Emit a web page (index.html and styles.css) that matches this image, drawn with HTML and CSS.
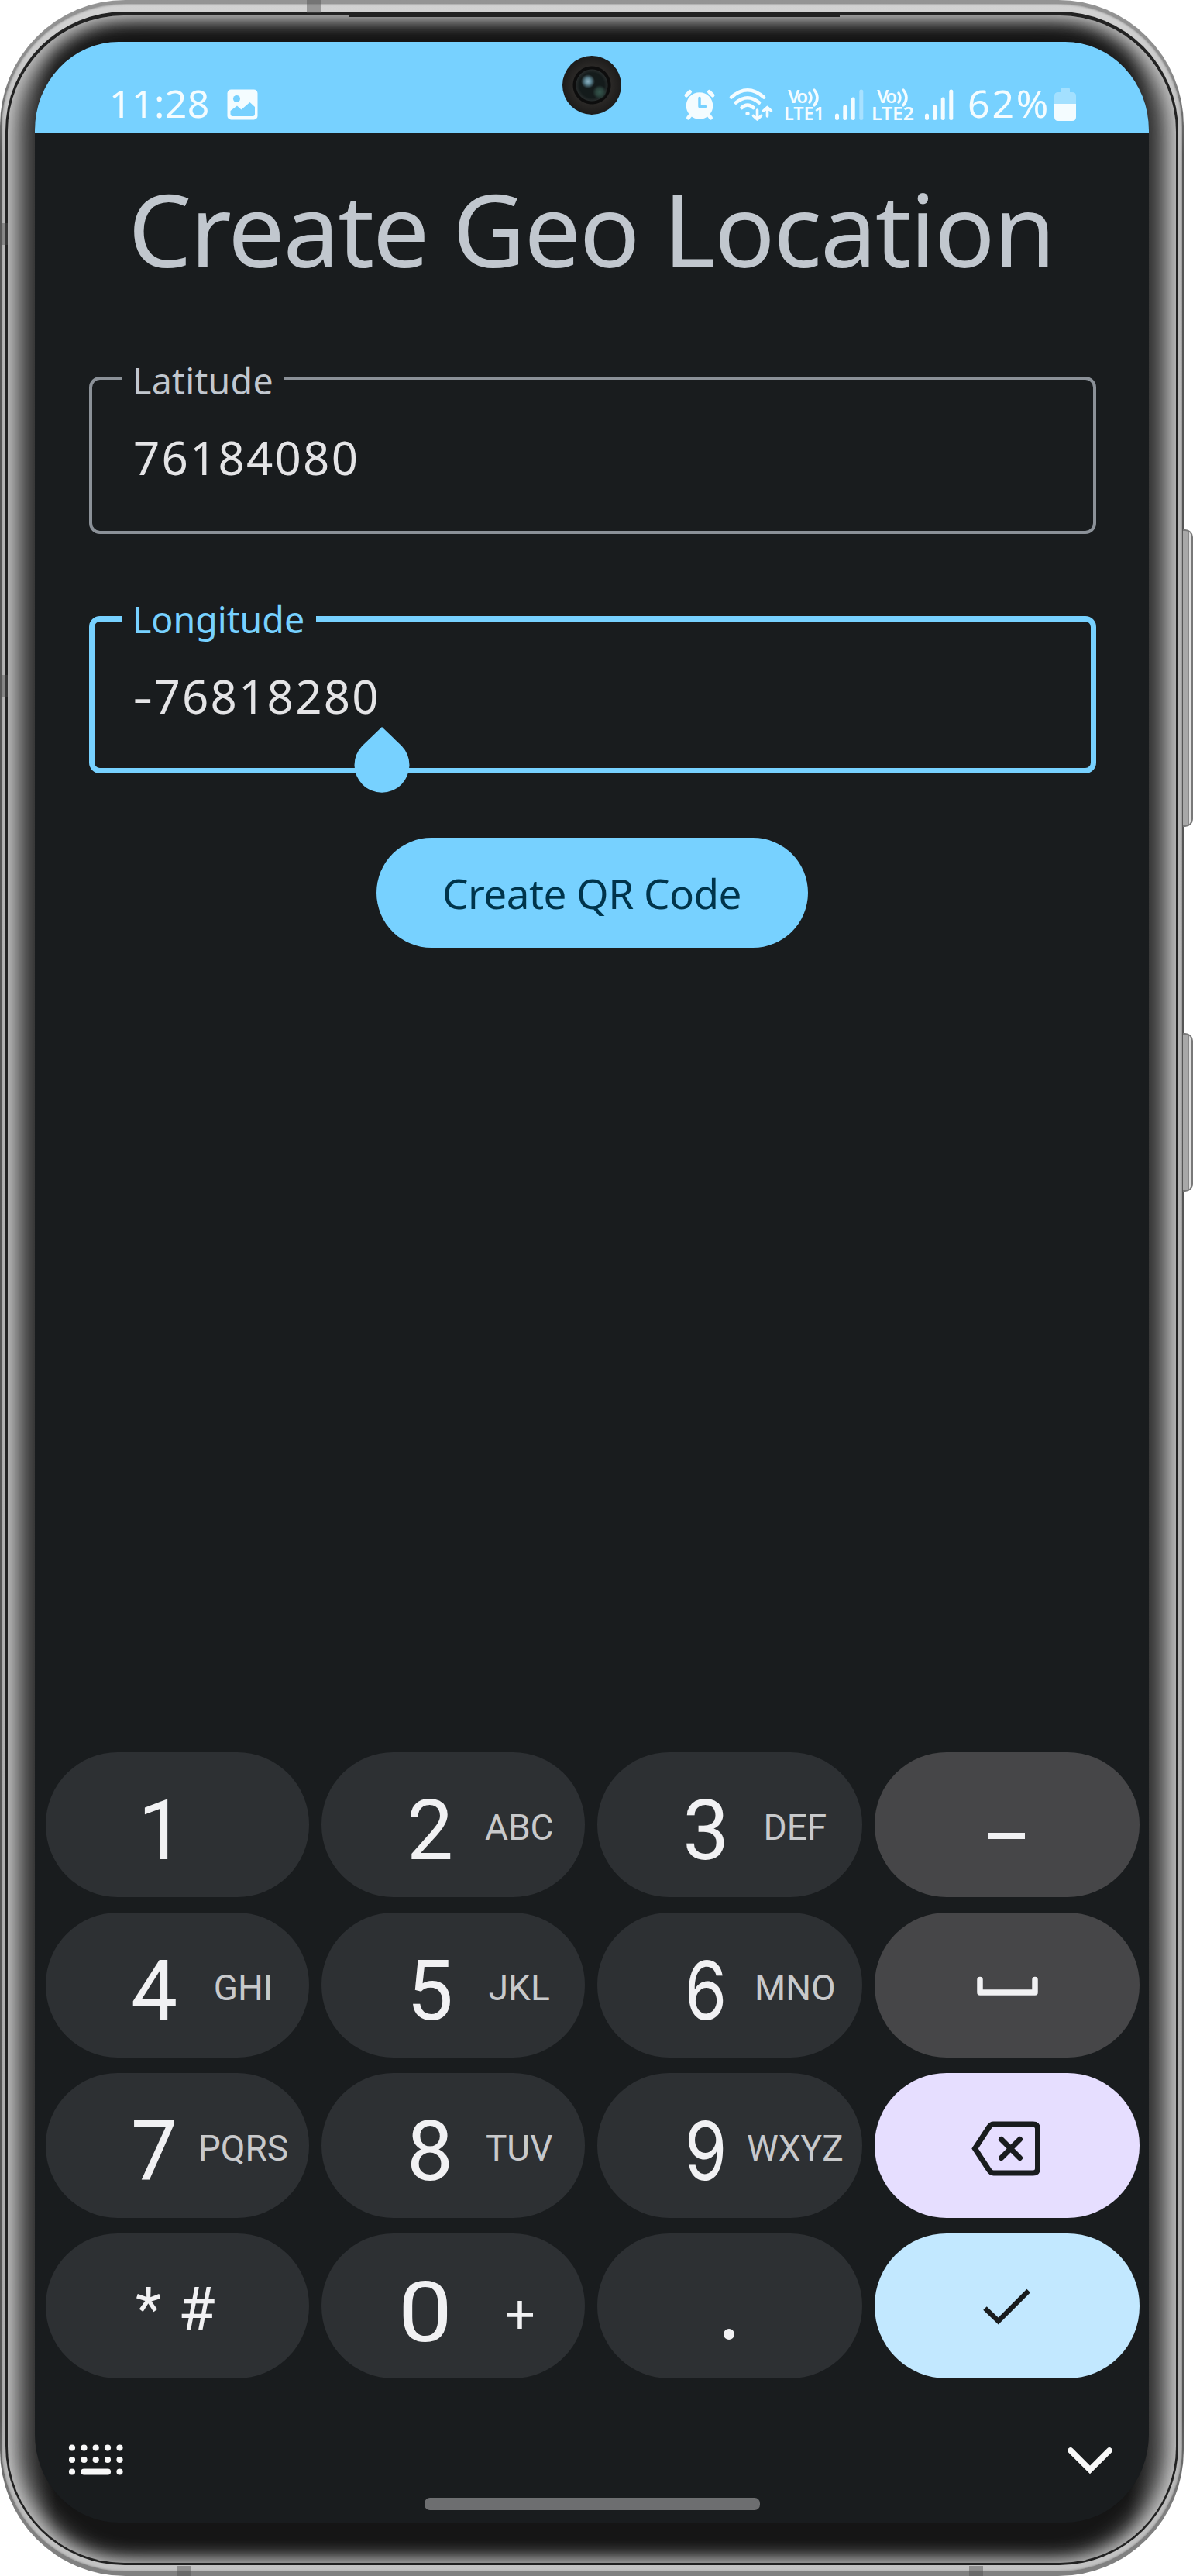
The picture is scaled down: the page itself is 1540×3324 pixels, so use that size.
FILE: index.html
```html
<!DOCTYPE html>
<html lang="en">
<head>
<meta charset="utf-8">
<title>Create Geo Location</title>
<link rel="stylesheet" href="styles.css">
</head>
<body>
<div class="phone">
  <i class="side-button volume"></i>
  <i class="side-button power"></i>
  <div class="rim"><div class="rim-dark"><div class="glass">
    <main class="screen">
      <header class="status">
        <span class="clock">11:28</span>
        <svg class="picture" width="40" height="40" viewBox="0 0 40 40"><rect x=".5" y=".5" width="39" height="39" rx="5" fill="#f4fcff"/><circle cx="12.500" cy="12.500" r="4.500" fill="#77d1ff"/><path d="M4.500 28 13 21.500l5.500 5 11-9.500 6.500 6v9q0 3-3 3H7.500q-3 0-3-3z" fill="#77d1ff"/></svg>
        <span class="spacer"></span>
        <svg class="alarm" width="40" height="40" viewBox="0 0 40 40"><g stroke="#f4fcff" stroke-width="5" stroke-linecap="round"><path d="M3 8 7.500 3.500M32.500 3.500 37 8M5.500 37l4-5M34.500 37l-4-5"/></g><circle cx="20" cy="21.500" r="17.300" fill="#f4fcff"/><path d="M20 11.500v11h7.500" fill="none" stroke="#77d1ff" stroke-width="3.500" stroke-linecap="round" stroke-linejoin="round"/></svg>
        <svg class="wifi" width="56" height="42" viewBox="0 0 56 42" fill="none" stroke="#f4fcff" stroke-width="4.500" stroke-linecap="round" stroke-linejoin="round"><path d="M3 11.500Q24 -7 45 11.500M9 18.500Q24 6 39 18.500M16.500 25Q24 18 31.500 25"/><circle cx="24" cy="32.500" r="2.600" fill="#f4fcff" stroke="none"/><path d="M36.500 28v12M31.500 35.500l5 4.500 5-4.500M49.500 36V24.500M44.500 29l5-4.500 5 4.500" stroke-width="3.600"/></svg>
        <svg class="volte one" width="54" height="44" viewBox="0 0 54 44"><text class="lte" x="4" y="20" textLength="26">Vo</text><text class="lte" x="-1" y="42" textLength="52" lengthAdjust="spacingAndGlyphs">LTE1</text><path d="M32 7q4 6 0 12M38 3q8 10 0 20" class="wave"/></svg>
        <svg class="bars first" width="38" height="40" viewBox="0 0 38 40"><path d="M3.500 34v3.500M13.800 23v14.500M24.200 13v24.500" class="bar"/><path d="M34.800 3v34.500" class="bar faint"/></svg>
        <svg class="volte two" width="56" height="44" viewBox="0 0 56 44"><text class="lte" x="5" y="20" textLength="26">Vo</text><text class="lte" x="-2" y="42" textLength="55" lengthAdjust="spacingAndGlyphs">LTE2</text><path d="M33 7q4 6 0 12M39 3q8 10 0 20" class="wave"/></svg>
        <svg class="bars second" width="38" height="40" viewBox="0 0 38 40"><path d="M3.500 34v3.500M13.800 23v14.500M24.200 13v24.500M34.800 3v34.500" class="bar"/></svg>
        <span class="percent">62%</span>
        <svg class="battery" width="28" height="44" viewBox="0 0 28 44"><path d="M8 2q0-2 2-2h8q2 0 2 2v4h3q5 0 5 5v11H0V11q0-5 5-5h3z" fill="#a3e0ff"/><path d="M0 21h28v17q0 5-5 5H5q-5 0-5-5z" fill="#f4fcff"/></svg>
        <i class="camera"></i>
      </header>

      <h1>Create Geo Location</h1>
      <div class="field">
        <label>Latitude</label>
        <div class="value">76184080</div>
      </div>
      <div class="field focused">
        <label>Longitude</label>
        <div class="value"><span class="minus">-</span>76818280</div>
        <svg class="handle" width="72" height="86" viewBox="0 0 72 86"><path d="M36 0 61.500 24.500A35.500 35.500 0 1 1 10.500 24.500Z" fill="#77d1ff"/></svg>
      </div>
      <button class="create">Create QR Code</button>

      <section class="keypad">
        <div class="key"><b class="one">1</b></div>
        <div class="key"><b>2</b><span>ABC</span></div>
        <div class="key"><b>3</b><span>DEF</span></div>
        <div class="key grey"><svg width="341" height="187" viewBox="0 0 341 187"><path d="M147 108h47" stroke="#f1f1f3" stroke-width="8"/></svg></div>
        <div class="key"><b>4</b><span>GHI</span></div>
        <div class="key"><b>5</b><span>JKL</span></div>
        <div class="key"><b class="straight">6</b><span>MNO</span></div>
        <div class="key grey"><svg width="341" height="187" viewBox="0 0 341 187"><path d="M136 86.500v16.500h71V86.500" fill="none" stroke="#f1f1f3" stroke-width="7.500" stroke-linecap="round" stroke-linejoin="round"/></svg></div>
        <div class="key"><b>7</b><span>PQRS</span></div>
        <div class="key"><b>8</b><span>TUV</span></div>
        <div class="key"><b class="straight">9</b><span>WXYZ</span></div>
        <div class="key lilac"><svg width="341" height="187" viewBox="0 0 341 187" fill="none" stroke="#191c1e" stroke-width="7" stroke-linejoin="round"><path d="M129.500 97.500 147.500 70q2.500-4 6-4h51q6 0 6 6v51q0 6-6 6h-51q-3.500 0-6-4z" stroke-linejoin="miter"/><path d="M163.500 85.500l24 24M187.500 85.500l-24 24" stroke-linecap="round"/></svg></div>
        <div class="key symbols"><em>*</em><em>#</em></div>
        <div class="key"><b class="zero">0</b><svg class="plus" width="36" height="36" viewBox="0 0 36 36"><path d="M18 0v36M1 18h34" stroke="#f1f1f3" stroke-width="5.500"/></svg></div>
        <div class="key"><svg width="341" height="187" viewBox="0 0 341 187"><circle cx="170" cy="130" r="7" fill="#f1f1f3"/></svg></div>
        <div class="key sky"><svg width="341" height="187" viewBox="0 0 341 187"><path d="M142.500 96.500l17.200 16.500 39-39" fill="none" stroke="#191c1e" stroke-width="6.500"/></svg></div>
      </section>

      <footer class="toolbar">
        <svg width="70" height="40" viewBox="0 0 70 40" fill="none" stroke="#f8f8f8" stroke-width="8.200" stroke-linecap="round"><path d="M4 4.500h0M19.500 4.500h0M34.700 4.500h0M50 4.500h0M65.500 4.500h0M4 20h0M19.500 20h0M34.700 20h0M50 20h0M65.500 20h0M4 35.500h0M65.500 35.500h0M19.500 35.500H50"/></svg>
        <svg width="58" height="36" viewBox="0 0 58 36"><path d="M4 5l25 25L54 5" fill="none" stroke="#f8f8f8" stroke-width="7.500" stroke-linecap="round"/></svg>
        <i class="home"></i>
      </footer>
    </main>
  </div></div></div>
  <i class="speaker"></i>
  <i class="band top"></i><i class="band left-a"></i><i class="band left-b"></i><i class="band bottom-a"></i><i class="band bottom-b"></i>
</div>
</body>
</html>
```
FILE: styles.css
```css
* { box-sizing: border-box; }
body {
  margin: 0;
  width: 1540px;
  height: 3324px;
  overflow: hidden;
  background: #fff;
  font-family: "Noto Sans", "Open Sans", sans-serif;
}
svg { display: block; flex: none; overflow: visible; }

/* Device shell */
.phone {
  position: relative;
  width: 1528px;
  height: 3324px;
  padding: 5px 2px 6px;
  border-radius: 162px;
  background: linear-gradient(#949494 0, #8c8c8c 90px, #555 200px, #555 3120px, #808080 3240px);
}
.rim {
  height: 100%;
  padding: 10px 5px 8px;
  border-radius: 160px;
  background: linear-gradient(#d2d2d2 0, #c6c6c6 120px, #b8b8b8 220px, #b0b0b0 3100px, #c4c4c4);
  box-shadow: inset 0 0 3px #777;
}
.rim-dark {
  height: 100%;
  padding: 5px 3px 3px;
  border-radius: 154px;
  background: #222;
}
.glass {
  height: 100%;
  padding: 34px 35px 52px;
  border-radius: 150px;
  background: linear-gradient(90deg, #2d2d2d 34px, #151515 62px, #151515 1446px, #2d2d2d 1474px);
  box-shadow: inset 17px 0 30px -3px #c6c6c6, inset -17px 0 30px -3px #c6c6c6, inset 0 3px 20px #606060;
}
.side-button {
  position: absolute;
  left: 1527px;
  width: 13px;
  border: 2px solid #787878;
  border-left: 0;
  border-radius: 0 10px 10px 0;
  background: linear-gradient(90deg, #a8a8a8 0 7px, #888 7px 8px, #dedede 8px);
}
.volume { top: 683px; height: 384px; }
.power { top: 1333px; height: 205px; }
.band { position: absolute; background: rgba(80, 80, 80, .45); }
.band.top { left: 396px; top: 0; width: 18px; height: 17px; }
.band.left-a { left: 2px; top: 288px; width: 8px; height: 28px; }
.band.left-b { left: 2px; top: 871px; width: 8px; height: 28px; }
.band.bottom-a { left: 228px; top: 3311px; width: 18px; height: 13px; }
.band.bottom-b { left: 1251px; top: 3311px; width: 18px; height: 13px; }
.speaker { position: absolute; left: 450px; top: 19px; width: 634px; height: 3px; background: #222; }

/* Screen */
.screen {
  position: relative;
  display: flex;
  flex-direction: column;
  width: 1438px;
  height: 3201px;
  overflow: hidden;
  border-radius: 108px / 114px;
  background: #191c1e;
}
.status {
  position: relative;
  display: flex;
  align-items: flex-start;
  height: 117.500px;
  padding: 61px 94px 0 96px;
  flex: none;
  background: #77d1ff;
  color: #f4fcff;
}
.clock, .percent {
  margin-top: -17px;
  font-size: 50px;
  line-height: 70px;
  letter-spacing: .4px;
  white-space: nowrap;
}
.clock { width: 152px; }
.spacer { flex: 1; }
.wifi { margin: -1px 16px 0 18px; }
.lte { font: 600 24px "Noto Sans", sans-serif; fill: #f4fcff; }
.wave { fill: none; stroke: #f4fcff; stroke-width: 3.500; stroke-linecap: round; }
.volte { margin-top: -2px; }
.bars { margin: 0 12px 0 10px; }
.bars.second { margin-right: 18px; }
.bar { fill: none; stroke: #f4fcff; stroke-width: 5; stroke-linecap: round; }
.faint { stroke: #a8e1ff; }
.percent { width: 112px; letter-spacing: 2.800px; }
.battery { margin-top: -2px; }
.camera {
  position: absolute;
  left: 681px;
  top: 18px;
  width: 76px;
  height: 76px;
  border-radius: 50%;
  background:
    radial-gradient(circle at 33px 33px, #8fb4c4 0, #5d8492 4px, transparent 9px),
    radial-gradient(circle at 48px 47px, #35554c 0, #2a413b 5px, transparent 9px),
    radial-gradient(circle at 38px 38px, #141b1b 0 16px, #252a2a 20px, #0d0d0d 21px 24px, #2a2826 25px, #1c1b1a 38px);
}
h1 {
  margin: 33px 0 101px;
  padding-right: 2px;
  font-size: 130px;
  line-height: 180px;
  font-weight: 400;
  letter-spacing: -2.100px;
  text-align: center;
  white-space: nowrap;
  color: #c1c7ce;
}
.field {
  position: relative;
  flex: none;
  width: 1300px;
  height: 203px;
  margin: 0 0 106px 70px;
  padding: 60px 53px;
  border: 4px solid #8b9198;
  border-radius: 14px;
}
.field.focused { margin-bottom: 83px; padding: 56px 50px; border: 7px solid #77d1ff; }
.field label {
  position: absolute;
  left: 39px;
  top: -29px;
  width: 209px;
  padding-left: 13px;
  font-size: 46.500px;
  line-height: 60px;
  letter-spacing: .3px;
  white-space: nowrap;
  background: #191c1e;
  color: #c1c7ce;
}
.focused label { left: 36px; top: -33px; width: 250px; letter-spacing: 0; color: #77d1ff; }
.value { font-size: 60px; line-height: 80px; letter-spacing: 2.200px; color: #e4e4e6; white-space: nowrap; }
.minus { display: inline-block; margin-right: 5px; transform: scaleX(1.35); transform-origin: 2px 50%; }
.handle { position: absolute; left: 335px; top: 136px; }
.create {
  flex: none;
  align-self: center;
  width: 557px;
  height: 142px;
  padding: 2px 0 0;
  border: 0;
  border-radius: 71px;
  background: #77d1ff;
  color: #00344b;
  font: 53px/140px "Noto Sans", sans-serif;
  letter-spacing: -.5px;
  white-space: nowrap;
}

/* Number pad */
.keypad {
  display: grid;
  grid-template-columns: 340px 340px 341.500px 342px;
  grid-auto-rows: 187px;
  gap: 19.900px 16.200px;
  margin: auto 0 0 14px;
}
.key {
  display: flex;
  position: relative;
  border-radius: 93px;
  background: #2d3033;
  color: #f1f1f3;
  font-family: Roboto, sans-serif;
}
.key.grey { background: #464648; }
.key.lilac { background: #e6deff; }
.key.sky { background: #c2e8ff; }
.key b {
  width: 100px;
  margin-left: 90px;
  font-size: 107px;
  font-weight: 400;
  line-height: 203px;
  text-align: center;
}
.key .one { margin-left: 99px; }
.key .straight { font-family: Inter, sans-serif; font-size: 105px; line-height: 200px; transform: scaleX(.84); }
.key .zero { margin-left: 84px; line-height: 205px; transform: scaleX(1.17); }
.key span { width: 130px; font-size: 46px; line-height: 195px; text-align: center; color: #c8c9cb; font-weight: 400; }
.plus { margin: 87px 0 0 54px; }
.symbols { gap: 22px; padding-left: 116px; }
.key em { font-style: normal; font-size: 77px; line-height: 199px; }

.toolbar {
  position: relative;
  display: flex;
  flex: none;
  justify-content: space-between;
  height: 186px;
  padding: 84.500px 47px 0 44px;
}
.toolbar svg + svg { margin-top: 3px; }
.home {
  position: absolute;
  left: 503px;
  top: 154px;
  width: 433px;
  height: 16px;
  border-radius: 7px;
  background: #6d6e70;
}
```
